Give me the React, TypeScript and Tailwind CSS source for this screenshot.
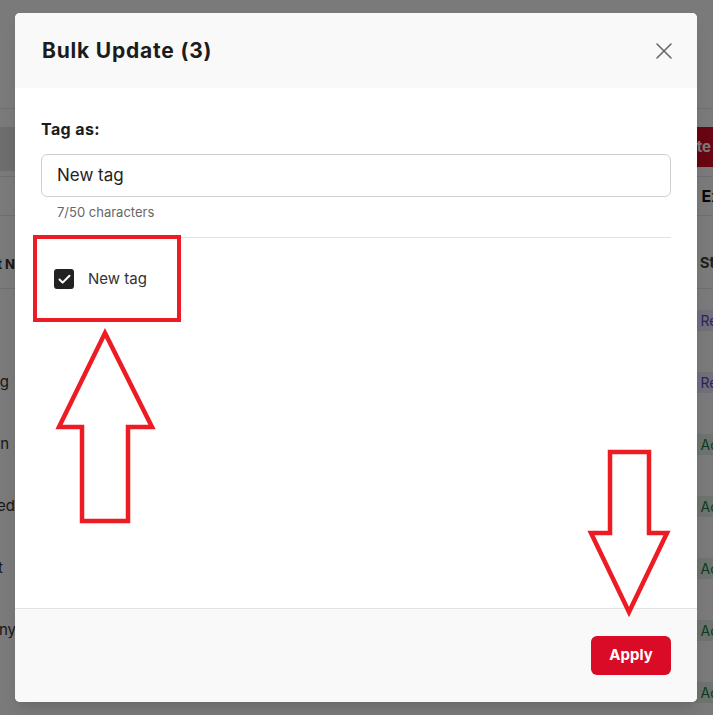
import { X, Check } from "lucide-react"

interface Row {
  label: string
  endClass: string
  status: "Ready" | "Active"
}

const rows: Row[] = [
  { label: "", endClass: "w-[9px]", status: "Ready" },
  { label: "Marketing", endClass: "w-[9px]", status: "Ready" },
  { label: "Open", endClass: "w-[9px]", status: "Active" },
  { label: "Subscribed", endClass: "w-[15px]", status: "Active" },
  { label: "Test", endClass: "w-[3px]", status: "Active" },
  { label: "Company", endClass: "w-[16px]", status: "Active" },
  { label: "", endClass: "w-[9px]", status: "Active" },
]

function StatusBadge({ status }: { status: Row["status"] }) {
  if (status === "Ready") {
    return (
      <span className="rounded px-2 py-[2px] text-[14px] bg-[#ece9fb] text-[#5b47c9]">
        Ready
      </span>
    )
  }
  return (
    <span className="rounded px-2 py-[2px] text-[14px] bg-[#e3f3e8] text-[#1f7a3f]">
      Active
    </span>
  )
}

// dimmed page that sits behind the dialog
function BackgroundPage() {
  return (
    <div className="flex h-[715px] w-[713px] flex-col overflow-hidden bg-white text-[#333]">
      <div className="h-[109px] shrink-0 border-b border-[#e6e6e6]" />
      <div className="flex h-[68px] shrink-0 items-start border-b border-[#e6e6e6] pt-[18px]">
        <div className="h-[44px] w-[300px] bg-[#e4e4e4]" />
        <button className="ml-auto -mr-[14px] h-[40px] rounded bg-[#d90b27] px-4 text-[15px] font-bold text-white">
          Create
        </button>
      </div>
      <div className="flex h-[39px] shrink-0 items-center justify-end border-b border-[#e6e6e6]">
        <span className="-mr-[40px] text-[16px] font-bold text-[#111]">Export</span>
      </div>
      <div className="flex h-[73px] shrink-0 items-end border-b border-[#e6e6e6] pb-[14px]">
        <div className="flex w-[15px] justify-end overflow-hidden whitespace-nowrap">
          <span className="text-[13px] font-bold">Contact N</span>
        </div>
        <span className="ml-auto -mr-[34px] text-[15px] font-bold text-[#444]">Status</span>
      </div>
      {rows.map((row, i) => (
        <div key={i} className="flex h-[62px] shrink-0 items-center">
          <div className={`flex justify-end overflow-hidden whitespace-nowrap ${row.endClass}`}>
            <span className="text-[15px]">{row.label}</span>
          </div>
          <div className="ml-auto -mr-[37px]">
            <StatusBadge status={row.status} />
          </div>
        </div>
      ))}
    </div>
  )
}

function Annotations() {
  return (
    <>
      <div className="pointer-events-none absolute left-[33px] top-[235px] h-[87px] w-[148px] border-[4px] border-[#ed1c24]" />
      <svg
        className="pointer-events-none absolute left-0 top-0"
        width={713}
        height={715}
        viewBox="0 0 713 715"
      >
        <polygon
          points="105,333 152,427 128,427 128,521 82,521 82,427 59,427"
          fill="none"
          stroke="#ed1c24"
          strokeWidth={4.5}
          strokeLinejoin="miter"
        />
        <polygon
          points="610,452 649,452 649,533 667,533 629,612 591,533 610,533"
          fill="none"
          stroke="#ed1c24"
          strokeWidth={4.5}
          strokeLinejoin="miter"
        />
      </svg>
    </>
  )
}

export default function App() {
  return (
    <div
      className="relative h-[715px] w-[713px] overflow-hidden"
      style={{ fontFamily: "Inter, 'Noto Sans', sans-serif" }}
    >
      <BackgroundPage />
      <div className="absolute inset-0 bg-black/[0.52]" />

      <div className="absolute left-[15px] top-[13px] flex h-[689px] w-[682px] flex-col overflow-hidden rounded-[5px] bg-white shadow-lg">
        <div className="flex h-[75px] shrink-0 items-center justify-between bg-[#f9f9f9] pl-[27px] pr-[19px]">
          <h2 className="text-[21px] font-bold tracking-[0.8px] text-[#1c1c1c]">Bulk Update (3)</h2>
          <X className="h-[28px] w-[28px] text-[#6b6b6b]" strokeWidth={1.4} />
        </div>

        <div className="flex flex-1 flex-col px-[26px] pt-[29px]">
          <label className="text-[16px] font-bold leading-6 tracking-[0.4px] text-[#1c1c1c]">Tag as:</label>
          <div className="mt-[13px] flex h-[43px] items-center rounded-[6px] border border-[#cfcfcf] px-[15px]">
            <span className="text-[17px] text-[#222]">New tag</span>
          </div>
          <p className="mt-[7px] pl-[16px] text-[13px] leading-4 text-[#666]">7/50 characters</p>
          <div className="mt-[17px] h-px bg-[#e3e3e3]" />
          <div className="ml-[13px] mt-[30px] flex items-center gap-[14px]">
            <span className="flex h-[20px] w-[20px] items-center justify-center rounded-[3px] bg-[#222]">
              <Check className="h-[15px] w-[15px] text-white" strokeWidth={3.2} />
            </span>
            <span className="text-[15px] text-[#333]">New tag</span>
          </div>
        </div>

        <div className="flex h-[94px] shrink-0 items-center justify-end border-t border-[#e2e2e2] bg-[#f9f9f9] pr-[26px]">
          <button className="h-[39px] w-[80px] rounded-[6px] bg-[#d90b27] text-[15px] font-bold text-white">
            Apply
          </button>
        </div>
      </div>

      <Annotations />
    </div>
  )
}
